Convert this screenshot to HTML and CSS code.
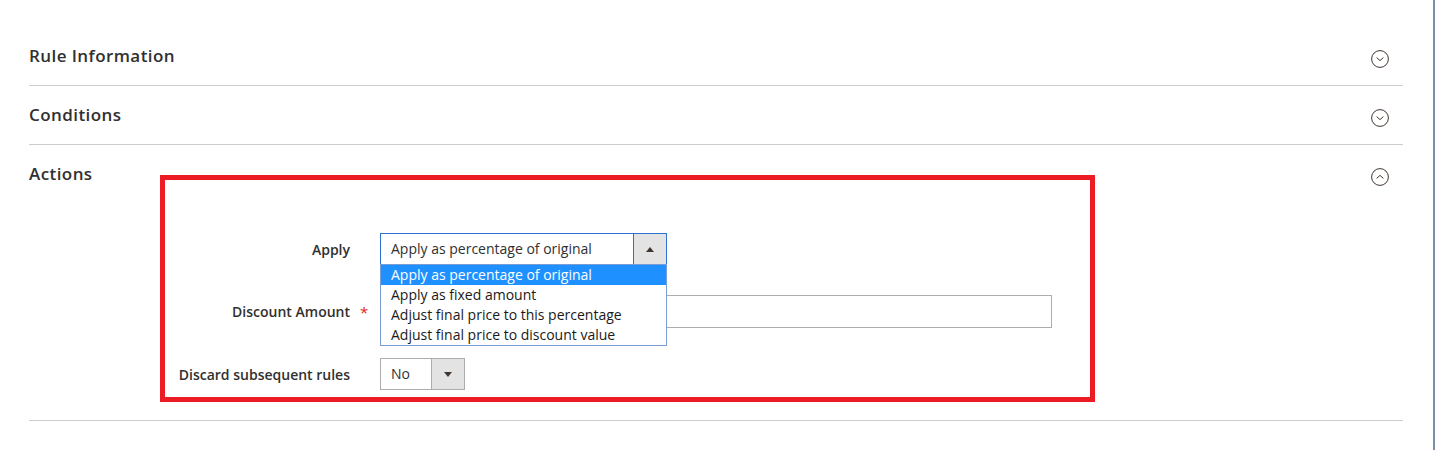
FILE: index.html
```html
<!DOCTYPE html>
<html lang="en">
<head>
<meta charset="utf-8">
<title>Cart Price Rule</title>
<link rel="stylesheet" href="styles.css">
</head>
<body>
<div class="page">
  <main class="content">
    <section class="section">
      <h2 class="title grow">Rule Information</h2>
      <span class="toggle">
        <svg width="18" height="18" viewBox="0 0 18 18"><circle cx="9" cy="9" r="8.4" fill="none" stroke="#41362f" stroke-width="1"/><path d="M5.6 7.6 L9 10.6 L12.4 7.6" fill="none" stroke="#41362f" stroke-width="1"/></svg>
      </span>
    </section>
    <section class="section">
      <h2 class="title grow">Conditions</h2>
      <span class="toggle">
        <svg width="18" height="18" viewBox="0 0 18 18"><circle cx="9" cy="9" r="8.4" fill="none" stroke="#41362f" stroke-width="1"/><path d="M5.6 7.6 L9 10.6 L12.4 7.6" fill="none" stroke="#41362f" stroke-width="1"/></svg>
      </span>
    </section>
    <section class="section">
      <h2 class="title fixed">Actions</h2>
      <div class="highlight">
        <div class="field">
          <label class="label">Apply</label>
          <div class="select open wide">
            <span class="value">Apply as percentage of original</span>
            <span class="btn"><span class="arrow up"></span></span>
            <ul class="menu">
              <li class="sel">Apply as percentage of original</li>
              <li>Apply as fixed amount</li>
              <li>Adjust final price to this percentage</li>
              <li>Adjust final price to discount value</li>
            </ul>
          </div>
        </div>
        <div class="field">
          <label class="label required">Discount Amount<span class="star">*</span></label>
          <div class="input"></div>
        </div>
        <div class="field">
          <label class="label">Discard subsequent rules</label>
          <div class="select narrow">
            <span class="value">No</span>
            <span class="btn"><span class="arrow down"></span></span>
          </div>
        </div>
      </div>
      <span class="toggle">
        <svg width="18" height="18" viewBox="0 0 18 18"><circle cx="9" cy="9" r="8.4" fill="none" stroke="#41362f" stroke-width="1"/><path d="M5.6 10.4 L9 7.4 L12.4 10.4" fill="none" stroke="#41362f" stroke-width="1"/></svg>
      </span>
    </section>
  </main>
  <div class="edge"></div>
</div>
</body>
</html>
```

FILE: styles.css
```css
* { box-sizing: border-box; }

body {
  margin: 0;
  font-family: "Open Sans", "Liberation Sans", sans-serif;
  color: #303030;
  background: #fff;
}

.page {
  display: flex;
  min-height: 100vh;
}

.content {
  flex: 1;
  padding: 27px 30px 0 29px;
}

.edge {
  width: 2px;
  background: #7d8fa8;
}

.section {
  display: flex;
  align-items: flex-start;
  border-bottom: 1px solid #cccccc;
}

.title {
  margin: 0;
  font-size: 17px;
  font-weight: 600;
  letter-spacing: 0.025em;
  line-height: 58px;
  color: #303030;
}

.title.grow { flex: 1; }
.title.fixed { width: 131px; flex: none; }

.toggle {
  margin: 23px 14px 0 auto;
  width: 18px;
  height: 18px;
  display: block;
}
.toggle svg { display: block; }

.highlight {
  width: 935px;
  margin: 30px 0 18px;
  border: 5px solid #ed1c24;
  padding: 53px 0 7px;
}

.field {
  display: flex;
  align-items: center;
  margin-bottom: 30px;
}
.field:last-child { margin-bottom: 0; }

.label {
  width: 215px;
  flex: none;
  display: flex;
  justify-content: flex-end;
  align-items: center;
  padding-right: 30px;
  font-size: 14px;
  font-weight: 600;
  color: #303030;
}

.label.required { padding-right: 12px; }

.star {
  width: 8px;
  margin-left: 10px;
  color: #e22626;
  font-weight: 400;
  font-size: 15px;
}

.select {
  position: relative;
  display: flex;
  height: 32px;
  border: 1px solid #adadad;
  font-size: 14px;
  background: #fff;
}
.select.wide { width: 287px; }
.select.narrow { width: 85px; }

.select .value {
  flex: 1;
  padding-left: 10px;
  line-height: 30px;
  color: #303030;
  white-space: nowrap;
}

.select .btn {
  width: 33px;
  flex: none;
  border-left: 1px solid #adadad;
  background: #e3e3e3;
  display: flex;
  align-items: center;
  justify-content: center;
}

.select.open { border-color: #2a72d4; }
.select.open .btn { border-left-color: #2a72d4; }

.arrow {
  width: 0;
  height: 0;
  border-left: 4px solid transparent;
  border-right: 4px solid transparent;
}
.arrow.up { border-bottom: 5px solid #41362f; }
.arrow.down { border-top: 5px solid #41362f; }

.menu {
  position: absolute;
  top: 30px;
  left: -1px;
  right: -1px;
  margin: 0;
  padding: 0;
  list-style: none;
  border: 1px solid #7a9cd6;
  background: #fff;
  z-index: 2;
}

.menu li {
  line-height: 20px;
  height: 20px;
  padding-left: 10px;
  color: #1a1a1a;
  white-space: nowrap;
}
.menu li.sel {
  background: #1e90ff;
  color: #fff;
}

.input {
  width: 672px;
  height: 33px;
  border: 1px solid #adadad;
  background: #fff;
}
```
